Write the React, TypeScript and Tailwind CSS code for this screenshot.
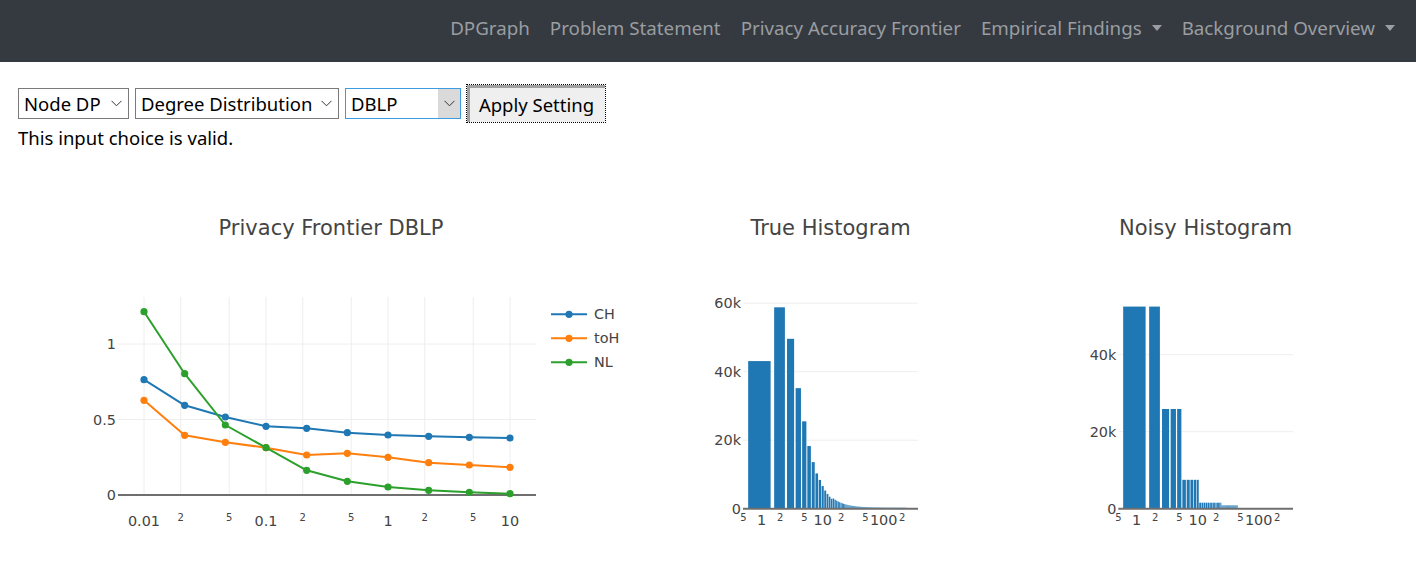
import React from "react";

const BLUE = "#1f77b4";
const ORANGE = "#ff7f0e";
const GREEN = "#2ca02c";
const PLOT_FONT = "'DejaVu Sans', Verdana, sans-serif";

const NAV_ITEMS: { label: string; dropdown?: boolean }[] = [
  { label: "DPGraph" },
  { label: "Problem Statement" },
  { label: "Privacy Accuracy Frontier" },
  { label: "Empirical Findings", dropdown: true },
  { label: "Background Overview", dropdown: true },
];

function Chevron() {
  return (
    <svg width="11" height="7" viewBox="0 0 11 7" className="shrink-0">
      <path d="M0.5 0.8 L5.5 5.8 L10.5 0.8" fill="none" stroke="#333" strokeWidth="1" />
    </svg>
  );
}

function Navbar() {
  return (
    <nav className="flex h-[62px] items-start justify-end bg-[#343a40] pr-[11px] pt-[14px]">
      {NAV_ITEMS.map((item) => (
        <a
          key={item.label}
          className="flex items-center px-[10px] text-[18.75px] leading-[28px] text-[#9a9da1]"
        >
          {item.label}
          {item.dropdown && (
            <span className="ml-[10px] inline-block h-0 w-0 border-x-[5px] border-t-[6px] border-x-transparent border-t-[#9a9da1]" />
          )}
        </a>
      ))}
    </nav>
  );
}

function SettingsForm() {
  return (
    <div className="px-[18px] pt-[22px] text-[18.5px] text-black">
      <div className="flex items-center gap-[6px]">
        <div className="flex h-[31px] w-[111px] items-center justify-between border border-[#7a7a7a] bg-white pl-[5px] pr-[6px]">
          <span>Node DP</span>
          <Chevron />
        </div>
        <div className="flex h-[31px] w-[204px] items-center justify-between border border-[#7a7a7a] bg-white pl-[5px] pr-[6px]">
          <span>Degree Distribution</span>
          <Chevron />
        </div>
        <div className="flex h-[31px] w-[116px] items-stretch border border-[#3b9de0] bg-white">
          <span className="flex flex-1 items-center pl-[5px]">DBLP</span>
          <span className="flex w-[22px] items-center justify-center bg-[#dadada]">
            <Chevron />
          </span>
        </div>
        <div className="ml-[-1px] border border-dotted border-black p-0">
          <div className="flex h-[37px] w-[138px] items-center justify-center border-l-[3px] border-t-[3px] border-l-[#a0a0a0] border-t-[#a0a0a0] bg-[#efefef] pr-[2px]">
            Apply Setting
          </div>
        </div>
      </div>
      <p className="mt-[2px] leading-[26px]">This input choice is valid.</p>
    </div>
  );
}

// ---------- Privacy frontier (log x axis) ----------

const FX0 = 144;
const FDEC = 122;
const fx = (v: number) => FX0 + FDEC * (Math.log10(v) + 2);
const POINT_X = Array.from({ length: 10 }, (_, i) => FX0 + (FDEC / 3) * i);

const SERIES = [
  { name: "CH", color: BLUE, ys: [379.7, 405.3, 417, 426.3, 428.3, 432.7, 435, 436.3, 437.3, 438] },
  { name: "toH", color: ORANGE, ys: [400.3, 435.3, 442.3, 447.7, 455, 453.3, 457.3, 462.7, 465, 467.3] },
  { name: "NL", color: GREEN, ys: [311.7, 373.7, 425, 447.7, 470.3, 481.3, 487, 490.3, 492.3, 493.7] },
];

const F_TICKS: { v: number; label: string; major: boolean }[] = [
  { v: 0.01, label: "0.01", major: true },
  { v: 0.02, label: "2", major: false },
  { v: 0.05, label: "5", major: false },
  { v: 0.1, label: "0.1", major: true },
  { v: 0.2, label: "2", major: false },
  { v: 0.5, label: "5", major: false },
  { v: 1, label: "1", major: true },
  { v: 2, label: "2", major: false },
  { v: 5, label: "5", major: false },
  { v: 10, label: "10", major: true },
];

function FrontierChart() {
  return (
    <svg width="662" height="400" viewBox="0 160 662 400" className="block shrink-0" style={{ fontFamily: PLOT_FONT }}>
      <text x="331" y="235" textAnchor="middle" fontSize="21" fill="#444">
        Privacy Frontier DBLP
      </text>
      {F_TICKS.map((t) => (
        <line key={`g${t.v}`} x1={fx(t.v)} x2={fx(t.v)} y1={297} y2={495} stroke="#eee" strokeWidth="1" />
      ))}
      <line x1={118} x2={536} y1={344} y2={344} stroke="#eee" strokeWidth="1" />
      <line x1={118} x2={536} y1={419.5} y2={419.5} stroke="#eee" strokeWidth="1" />
      <line x1={118} x2={536} y1={495} y2={495} stroke="#6f6f6f" strokeWidth="2" />
      {[
        { y: 344, l: "1" },
        { y: 419.5, l: "0.5" },
        { y: 495, l: "0" },
      ].map((t) => (
        <text key={t.l} x={116} y={t.y + 5} textAnchor="end" fontSize="14.4" fill="#444">
          {t.l}
        </text>
      ))}
      {F_TICKS.map((t) =>
        t.major ? (
          <text key={`l${t.v}`} x={fx(t.v)} y={525.5} textAnchor="middle" fontSize="14.4" fill="#444">
            {t.label}
          </text>
        ) : (
          <text key={`l${t.v}`} x={fx(t.v)} y={521} textAnchor="middle" fontSize="10" fill="#444">
            {t.label}
          </text>
        )
      )}
      {SERIES.map((s) => (
        <g key={s.name}>
          <polyline
            points={s.ys.map((y, i) => `${POINT_X[i]},${y}`).join(" ")}
            fill="none"
            stroke={s.color}
            strokeWidth="2"
            strokeLinejoin="round"
          />
          {s.ys.map((y, i) => (
            <circle key={i} cx={POINT_X[i]} cy={y} r="3.6" fill={s.color} />
          ))}
        </g>
      ))}
      {SERIES.map((s, i) => {
        const y = 314.3 + 24 * i;
        return (
          <g key={`leg${s.name}`}>
            <line x1={551} x2={587} y1={y} y2={y} stroke={s.color} strokeWidth="2" />
            <circle cx={569} cy={y} r="3.6" fill={s.color} />
            <text x={594} y={y + 5} fontSize="14.4" fill="#444">
              {s.name}
            </text>
          </g>
        );
      })}
    </svg>
  );
}

// ---------- Histograms (log x axis, bars of width 0.8) ----------

const trueHist: number[] = (() => {
  const head = [43100, 58800, 49600, 35200, 25500, 18300, 13600, 10300, 8400, 6600, 5300, 4300, 3500, 2900];
  const out = [...head];
  for (let k = head.length + 1; k <= 236; k++) {
    out.push(6600 * Math.pow(10 / k, 2.2) + 280);
  }
  return out;
})();

const noisyHist: number[] = (() => {
  const out: number[] = [];
  for (let k = 1; k <= 45; k++) {
    if (k <= 2) out.push(52500);
    else if (k <= 5) out.push(25900);
    else if (k <= 10) out.push(7500);
    else if (k <= 24) out.push(1560);
    else out.push(880);
  }
  return out;
})();

const H_TICKS: { v: number; label: string; major: boolean }[] = [
  { v: 0.5, label: "5", major: false },
  { v: 1, label: "1", major: true },
  { v: 2, label: "2", major: false },
  { v: 5, label: "5", major: false },
  { v: 10, label: "10", major: true },
  { v: 20, label: "2", major: false },
  { v: 50, label: "5", major: false },
  { v: 100, label: "100", major: true },
  { v: 200, label: "2", major: false },
];

type HistProps = {
  title: string;
  viewX: number;
  width: number;
  x1: number;
  left: number;
  right: number;
  per20k: number;
  grids: number[];
  data: number[];
};

function Histogram({ title, viewX, width, x1, left, right, per20k, grids, data }: HistProps) {
  const Y0 = 508.7;
  const hx = (v: number) => x1 + 61 * Math.log10(v);
  const hy = (v: number) => Y0 - (v / 20000) * per20k;
  const center = (left + right) / 2;
  return (
    <svg
      width={width}
      height="400"
      viewBox={`${viewX} 160 ${width} 400`}
      className="block shrink-0"
      style={{ fontFamily: PLOT_FONT }}
    >
      <text x={center} y="235" textAnchor="middle" fontSize="21" fill="#444">
        {title}
      </text>
      {grids.map((g) => (
        <line key={g} x1={left} x2={right} y1={hy(g)} y2={hy(g)} stroke="#eee" strokeWidth="1" />
      ))}
      {data.map((v, i) => {
        const k = i + 1;
        const a = hx(k - 0.4);
        const b = Math.min(hx(k + 0.4), right);
        if (a >= right) return null;
        return <rect key={k} x={a} y={hy(v)} width={b - a} height={Y0 - hy(v)} fill={BLUE} />;
      })}
      <line x1={left} x2={right} y1={Y0} y2={Y0} stroke="#6f6f6f" strokeWidth="2" />
      {[0, ...grids].map((g) => (
        <text key={`y${g}`} x={left - 2} y={hy(g) + 5} textAnchor="end" fontSize="14.4" fill="#444">
          {g === 0 ? "0" : `${g / 1000}k`}
        </text>
      ))}
      {H_TICKS.map((t) =>
        t.major ? (
          <text key={`x${t.v}`} x={hx(t.v)} y={525} textAnchor="middle" fontSize="14.4" fill="#444">
            {t.label}
          </text>
        ) : (
          <text key={`x${t.v}`} x={hx(t.v)} y={521} textAnchor="middle" fontSize="10" fill="#444">
            {t.label}
          </text>
        )
      )}
    </svg>
  );
}

export default function App() {
  return (
    <div className="min-h-[586px] bg-white" style={{ fontFamily: "'Noto Sans', 'Open Sans', sans-serif" }}>
      <Navbar />
      <SettingsForm />
      <div className="mt-[9px] flex">
        <FrontierChart />
        <Histogram
          title="True Histogram"
          viewX={662}
          width={336}
          x1={761.7}
          left={743}
          right={918}
          per20k={68.5}
          grids={[20000, 40000, 60000]}
          data={trueHist}
        />
        <Histogram
          title="Noisy Histogram"
          viewX={998}
          width={418}
          x1={1136.7}
          left={1118.3}
          right={1293}
          per20k={77}
          grids={[20000, 40000]}
          data={noisyHist}
        />
      </div>
    </div>
  );
}
